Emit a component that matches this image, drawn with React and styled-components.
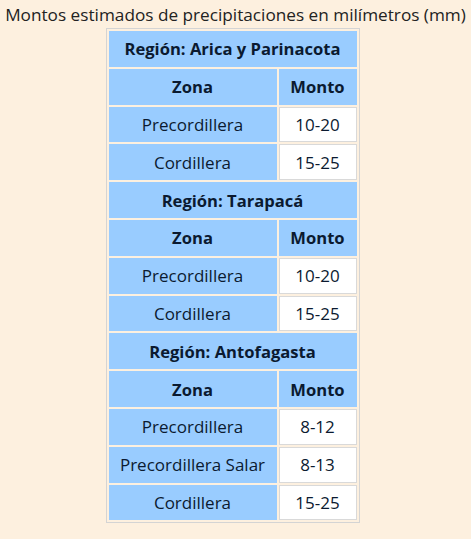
import React from 'react';
import styled, { createGlobalStyle } from 'styled-components';

const GlobalStyle = createGlobalStyle`
  html, body {
    margin: 0;
    padding: 0;
    background: #fdf0df;
  }
  body {
    font-family: "Open Sans", "Noto Sans", sans-serif;
    color: #222;
  }
`;

const regions = [
  {
    name: 'Arica y Parinacota',
    rows: [
      ['Precordillera', '10-20'],
      ['Cordillera', '15-25'],
    ],
  },
  {
    name: 'Tarapacá',
    rows: [
      ['Precordillera', '10-20'],
      ['Cordillera', '15-25'],
    ],
  },
  {
    name: 'Antofagasta',
    rows: [
      ['Precordillera', '8-12'],
      ['Precordillera Salar', '8-13'],
      ['Cordillera', '15-25'],
    ],
  },
];

const App = () => {
  return (
    <>
      <GlobalStyle />
      <Page>
        <Title>Montos estimados de precipitaciones en milímetros (mm)</Title>
        <Table>
          <tbody>
            {regions.map((region) => (
              <React.Fragment key={region.name}>
                <tr>
                  <HeadCell colSpan={2}>Región: {region.name}</HeadCell>
                </tr>
                <tr>
                  <HeadCell $zone>Zona</HeadCell>
                  <HeadCell>Monto</HeadCell>
                </tr>
                {region.rows.map(([zona, monto]) => (
                  <tr key={zona}>
                    <ZoneCell>{zona}</ZoneCell>
                    <ValueCell>{monto}</ValueCell>
                  </tr>
                ))}
              </React.Fragment>
            ))}
          </tbody>
        </Table>
      </Page>
    </>
  );
};

export default App;

const Page = styled.div`
  display: flex;
  flex-direction: column;
  align-items: center;
  padding-top: 2px;
`;

const Title = styled.div`
  font-size: 17.2px;
  line-height: 26px;
  color: #222;
  white-space: nowrap;
`;

const Table = styled.table`
  border: 1px solid #d4d4d4;
  border-spacing: 2px;
  margin-left: -6px;
`;

const Cell = styled.td`
  height: 35.8px;
  padding: 0 6px;
  text-align: center;
  font-size: 17px;
  color: #0b1a30;
  border: 1px solid #d9d9d9;
  box-sizing: border-box;
`;

const HeadCell = styled(Cell).attrs({ as: 'th' })`
  background: #99ccff;
  border-color: #99ccff;
  font-weight: 700;
  font-size: 16.6px;
  width: ${(p) => (p.$zone ? '168px' : 'auto')};
`;

const ZoneCell = styled(Cell)`
  background: #99ccff;
  border-color: #99ccff;
  width: 168px;
`;

const ValueCell = styled(Cell)`
  background: #ffffff;
  width: 78px;
`;
